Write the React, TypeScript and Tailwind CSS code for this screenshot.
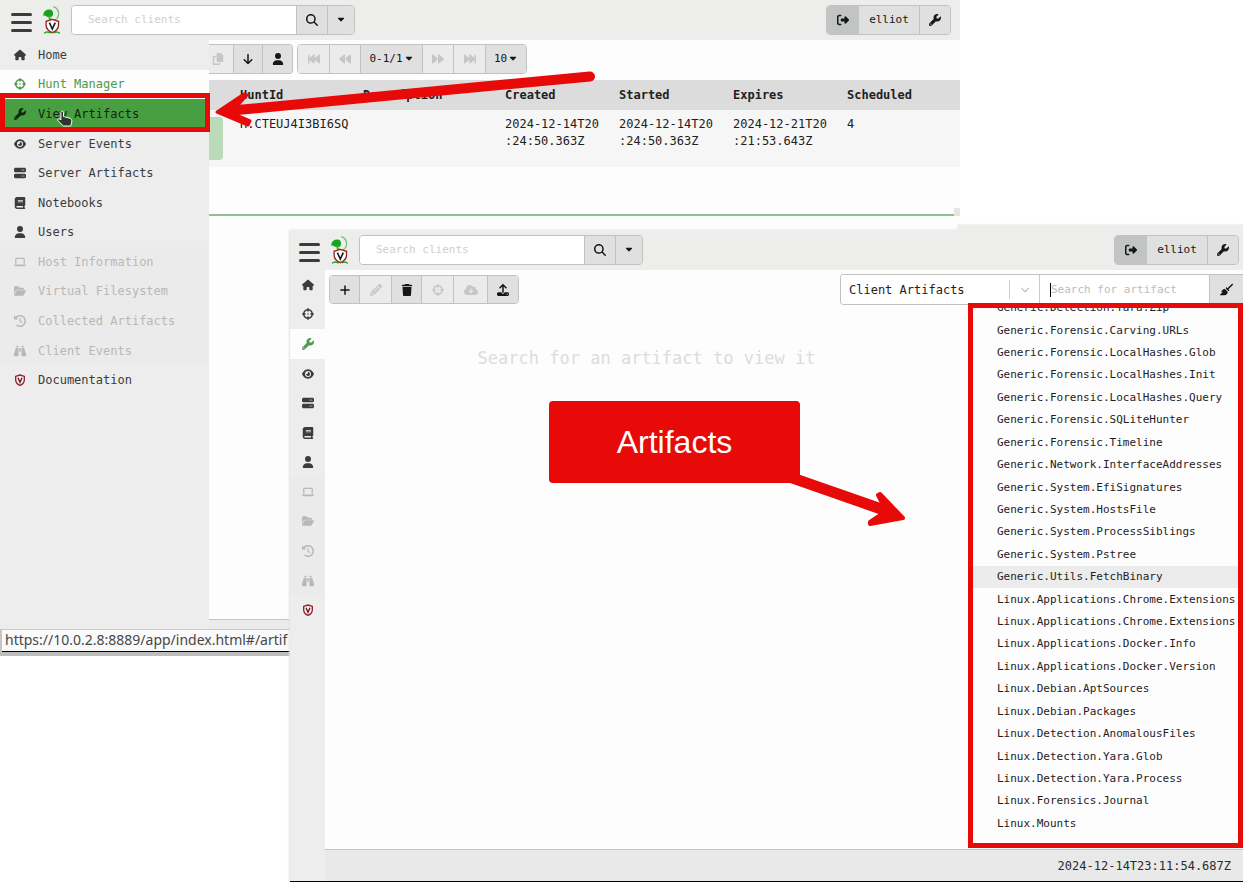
import type { ComponentType, ReactNode } from "react";
import {
  FaArrowDown,
  FaBackward,
  FaBackwardFast,
  FaBinoculars,
  FaBook,
  FaBroom,
  FaCaretDown,
  FaClockRotateLeft,
  FaCloudArrowDown,
  FaCopy,
  FaCrosshairs,
  FaEye,
  FaFolderOpen,
  FaForward,
  FaForwardFast,
  FaHouse,
  FaLaptop,
  FaMagnifyingGlass,
  FaPencil,
  FaPlus,
  FaRightFromBracket,
  FaServer,
  FaTrash,
  FaUpload,
  FaUser,
  FaWrench,
} from "react-icons/fa6";
import { FiChevronDown } from "react-icons/fi";

type IconType = ComponentType<{ className?: string }>;

function ShieldIcon({ className }: { className?: string }) {
  return (
    <svg viewBox="0 0 32 36" className={className} fill="none" aria-hidden="true">
      <path
        d="M16 3 L29 7 V17 C29 25 23 31 16 34 C9 31 3 25 3 17 V7 Z"
        fill="#f7efef"
        stroke="#9c1f2b"
        strokeWidth="4"
        strokeLinejoin="round"
      />
      <path d="M10 11 L16 25 L22 11" stroke="#5a2028" strokeWidth="4" />
    </svg>
  );
}

function Logo() {
  return (
    <svg viewBox="126 14 57 92" className="h-[30px] w-[19px]" fill="none" role="img" aria-label="Velociraptor">
      <path d="M160 19 C172 22 178 34 176 46 C175 52 171 57 165 60" stroke="#6cbd78" strokeWidth="4" />
      <path d="M130 40 C132 31 142 25 154 29 C161 33 161 45 155 50 C147 52 139 50 135 46 L129 47 Z" fill="#17a31c" />
      <path d="M150 46 C146 52 148 57 155 60" stroke="#3fae45" strokeWidth="6" />
      <path d="M132 101 C138 94 146 97 152 100 M162 100 C168 95 175 97 180 101" stroke="#22a52a" strokeWidth="4" />
      <path
        d="M157 58 L176 64 V76 C176 87 168 94 157 99 C146 94 138 87 138 76 V64 Z"
        fill="#fff"
        stroke="#8d2420"
        strokeWidth="4"
      />
      <path d="M148 68 L157 88 L166 68" stroke="#1c1c1c" strokeWidth="5" />
    </svg>
  );
}

const navItems: { label: string; icon: IconType; disabled?: boolean }[] = [
  { label: "Home", icon: FaHouse },
  { label: "Hunt Manager", icon: FaCrosshairs },
  { label: "View Artifacts", icon: FaWrench },
  { label: "Server Events", icon: FaEye },
  { label: "Server Artifacts", icon: FaServer },
  { label: "Notebooks", icon: FaBook },
  { label: "Users", icon: FaUser },
  { label: "Host Information", icon: FaLaptop, disabled: true },
  { label: "Virtual Filesystem", icon: FaFolderOpen, disabled: true },
  { label: "Collected Artifacts", icon: FaClockRotateLeft, disabled: true },
  { label: "Client Events", icon: FaBinoculars, disabled: true },
  { label: "Documentation", icon: ShieldIcon },
];

function navTone(label: string, active: string, hovered: string | undefined, disabled?: boolean) {
  if (label === hovered) return "bg-[#489f41] text-[#12240f]";
  if (label === active) return "bg-[#fdfdfd] text-[#4c9a4c]";
  if (disabled) return "bg-[#ebebeb] text-[#b8b8b8]";
  return "text-[#3a3d3d]";
}

function Nav({ active, hovered, expanded }: { active: string; hovered?: string; expanded?: boolean }) {
  return (
    <nav aria-label={expanded ? "Main menu" : "Compact menu"} className="bg-[#ededed]">
      <ul className="grid h-[355px] grid-rows-12">
        {navItems.map(({ label, icon: Icon, disabled }) => (
          <li key={label} className="grid">
            <a
              href={"#" + label.toLowerCase().replace(" ", "-")}
              aria-label={label}
              aria-disabled={disabled}
              className={
                "flex items-center text-[12px] leading-4 " +
                (expanded ? "pl-[14px] " : "pl-[12px] ") +
                navTone(label, active, hovered, disabled)
              }
            >
              <Icon className="h-3 w-3 shrink-0" />
              {expanded && <span className="pl-3">{label}</span>}
            </a>
          </li>
        ))}
      </ul>
    </nav>
  );
}

function ToolButton({
  label,
  width,
  disabled,
  tone = "bg-[#dfe0df]",
  children,
}: {
  label: string;
  width: string;
  disabled?: boolean;
  tone?: string;
  children: ReactNode;
}) {
  return (
    <button
      type="button"
      aria-label={label}
      disabled={disabled}
      className={
        "flex h-full items-center justify-center gap-px border-l border-[#c0c4c1] text-[11px] first:border-l-0 " +
        width +
        " " +
        (disabled ? "bg-[#ebebeb] text-[#c6c6c6]" : tone + " text-[#161616]")
      }
    >
      {children}
    </button>
  );
}

function Caret() {
  return <FaCaretDown className="mb-[2px] size-[10px]" />;
}

function Group({ children, height = "h-[30px]" }: { children: ReactNode; height?: string }) {
  return (
    <div className={"flex shrink-0 overflow-hidden rounded border border-[#c0c4c1] " + height}>{children}</div>
  );
}

function TopBar({ padding }: { padding: string }) {
  return (
    <header className={"flex h-10 items-center bg-[#ededec] " + padding}>
      <button type="button" aria-label="Toggle menu" className="mt-[5px] flex w-[21px] flex-col gap-[5px]">
        <span className="h-[3px] rounded bg-[#3b3d3d]" />
        <span className="h-[3px] rounded bg-[#3b3d3d]" />
        <span className="h-[3px] rounded bg-[#3b3d3d]" />
      </button>
      <a href="#welcome" className="ml-[10px]">
        <Logo />
      </a>
      <form className="ml-[10px] flex h-[30px] w-[284px] overflow-hidden rounded border border-[#bfc3c0]">
        <input
          aria-label="Search clients"
          placeholder="Search clients"
          className="min-w-0 flex-1 bg-white pt-px pl-4 text-[11px] placeholder:text-[#cfcfcf]"
        />
        <ToolButton label="Search" width="w-[31px] first-of-type:border-l">
          <FaMagnifyingGlass className="size-3" />
        </ToolButton>
        <ToolButton label="Search options" width="w-[27px]">
          <Caret />
        </ToolButton>
      </form>
      <div className="ml-auto">
        <Group>
          <ToolButton label="Log out" width="w-[31px]" tone="bg-[#c2c4c3]">
            <FaRightFromBracket className="size-3" />
          </ToolButton>
          <ToolButton label="User elliot" width="w-[61px]">
            elliot
          </ToolButton>
          <ToolButton label="Settings" width="w-[31px]">
            <FaWrench className="size-3" />
          </ToolButton>
        </Group>
      </div>
    </header>
  );
}

const huntColumns = [
  { name: "HuntId", value: "H.CTEUJ4I3BI6SQ", width: "w-[123px]" },
  { name: "Description", value: "", width: "w-[142px]" },
  { name: "Created", value: "2024-12-14T20\n:24:50.363Z", width: "w-[114px]" },
  { name: "Started", value: "2024-12-14T20\n:24:50.363Z", width: "w-[114px]" },
  { name: "Expires", value: "2024-12-21T20\n:21:53.643Z", width: "w-[114px]" },
  { name: "Scheduled", value: "4", width: "" },
];

function HuntTable() {
  return (
    <table className="w-full table-fixed border-collapse text-left text-[12px] leading-[17px] text-[#1f2121]">
      <thead>
        <tr className="h-[30px] bg-[#dcdcdc]">
          <th className="w-[26px]" aria-label="State" />
          {huntColumns.map((c) => (
            <th key={c.name} className={"pl-[5px] font-bold " + c.width}>
              {c.name}
            </th>
          ))}
        </tr>
      </thead>
      <tbody>
        <tr className="h-[57px] bg-[#f6f6f6] align-top">
          <td className="pt-[7px]">
            <button
              type="button"
              aria-label="Hunt state"
              className="block h-[43px] w-[14px] rounded-r bg-[#bbdbb8]"
            />
          </td>
          {huntColumns.map((c) => (
            <td key={c.name} className="pt-[6px] pl-[5px] whitespace-pre">
              {c.value}
            </td>
          ))}
        </tr>
      </tbody>
    </table>
  );
}

function HandCursor() {
  return (
    <svg viewBox="168 331 50 52" className="absolute top-[110px] left-[56px] h-[17px] w-[17px]" aria-hidden="true">
      <path
        d="M182 338 C182 333 190 333 190 338 V351 L209 356 C215 358 216 362 215 368 L212 380 H190 L173 364 C170 359 175 356 179 359 L182 361 Z"
        fill="#2f3430"
        stroke="#fff"
        strokeWidth="3"
        strokeLinejoin="round"
      />
    </svg>
  );
}

function HuntManagerWindow() {
  return (
    <section
      aria-label="Hunt manager"
      className="relative col-start-1 row-start-1 mr-[283px] flex h-[656px] flex-col overflow-hidden bg-[#fdfdfd]"
    >
      <TopBar padding="pl-[11px] pr-[9px]" />
      <div className="flex min-h-0 flex-1">
        <div className="w-[209px] shrink-0 bg-[#ededed]">
          <Nav active="Hunt Manager" hovered="View Artifacts" expanded />
        </div>
        <main className="flex min-w-0 flex-1 flex-col">
          <div className="flex h-10 items-start gap-1 pt-1">
            <div className="flex h-[30px] overflow-hidden rounded-r border border-l-0 border-[#c0c4c1]">
              <ToolButton label="Copy hunt" width="w-6 pr-[6px]" disabled>
                <FaCopy className="size-3" />
              </ToolButton>
              <ToolButton label="Download results" width="w-[29px]">
                <FaArrowDown className="size-3" />
              </ToolButton>
              <ToolButton label="Show my hunts" width="w-[30px]">
                <FaUser className="size-3" />
              </ToolButton>
            </div>
            <Group>
              <ToolButton label="First page" width="w-[31px]" disabled>
                <FaBackwardFast className="size-3" />
              </ToolButton>
              <ToolButton label="Previous page" width="w-[31px]" disabled>
                <FaBackward className="size-3" />
              </ToolButton>
              <ToolButton label="Rows 0-1/1" width="w-[62px]">
                0-1/1
                <Caret />
              </ToolButton>
              <ToolButton label="Next page" width="w-[31px]" disabled>
                <FaForward className="size-3" />
              </ToolButton>
              <ToolButton label="Last page" width="w-8" disabled>
                <FaForwardFast className="size-3" />
              </ToolButton>
              <ToolButton label="Page size 10" width="w-[41px]">
                10
                <Caret />
              </ToolButton>
            </Group>
          </div>
          <HuntTable />
          <div className="mt-[41px] flex items-end">
            <div className="h-[2px] flex-1 bg-[#8fc193]" />
            <div className="h-2 w-[6px] bg-[#e4e5e5]" />
          </div>
          <div className="flex-1" />
          <div className="h-[37px] border-t border-[#c3c5c4] bg-[#ebebeb]" />
        </main>
      </div>
      <p className="absolute bottom-0 left-0 w-full border-b-4 border-[#bdbdbd] bg-[#c5c5c5] pl-[2px]">
        <span className="block h-[23px] overflow-hidden border-t border-b border-t-[#c9c9c9] border-b-black bg-[#fafafa] pl-[3px] font-['Noto_Sans',sans-serif] text-[14px] leading-5 text-[#474747]">
          https://10.0.2.8:8889/app/index.html#/artif
        </span>
      </p>
      <div className="pointer-events-none absolute top-[93px] left-0 h-[39px] w-[210px] border-[5px] border-[#e80909]" />
      <HandCursor />
      <svg viewBox="0 0 390 64" className="absolute top-[68px] left-[210px] h-16 w-[390px]" aria-hidden="true">
        <path d="M380 8.500 L22 42.500" stroke="#e80909" strokeWidth="10" strokeLinecap="round" />
        <path
          d="M7 44 L34 26 L37 27 L28 37 L26 47 L40 53 L38 57 Z"
          fill="#e80909"
          stroke="#e80909"
          strokeWidth="3"
          strokeLinejoin="round"
        />
      </svg>
    </section>
  );
}

const artifacts = [
  "Generic.Detection.Yara.Zip",
  "Generic.Forensic.Carving.URLs",
  "Generic.Forensic.LocalHashes.Glob",
  "Generic.Forensic.LocalHashes.Init",
  "Generic.Forensic.LocalHashes.Query",
  "Generic.Forensic.SQLiteHunter",
  "Generic.Forensic.Timeline",
  "Generic.Network.InterfaceAddresses",
  "Generic.System.EfiSignatures",
  "Generic.System.HostsFile",
  "Generic.System.ProcessSiblings",
  "Generic.System.Pstree",
  "Generic.Utils.FetchBinary",
  "Linux.Applications.Chrome.Extensions",
  "Linux.Applications.Chrome.Extensions",
  "Linux.Applications.Docker.Info",
  "Linux.Applications.Docker.Version",
  "Linux.Debian.AptSources",
  "Linux.Debian.Packages",
  "Linux.Detection.AnomalousFiles",
  "Linux.Detection.Yara.Glob",
  "Linux.Detection.Yara.Process",
  "Linux.Forensics.Journal",
  "Linux.Mounts",
];

function ArtifactToolbar() {
  return (
    <div className="flex h-[35px] items-start justify-between pt-1 pl-1">
      <div className="pt-px">
        <Group height="h-[29px]">
          <ToolButton label="Add artifact" width="w-[29px]">
            <FaPlus className="size-3" />
          </ToolButton>
          <ToolButton label="Edit artifact" width="w-8" disabled>
            <FaPencil className="size-3" />
          </ToolButton>
          <ToolButton label="Delete artifact" width="w-[30px]">
            <FaTrash className="size-3" />
          </ToolButton>
          <ToolButton label="Hunt artifact" width="w-8" disabled>
            <FaCrosshairs className="size-3" />
          </ToolButton>
          <ToolButton label="Collect artifact" width="w-[34px]" disabled>
            <FaCloudArrowDown className="size-[14px]" />
          </ToolButton>
          <ToolButton label="Upload artifacts" width="w-[31px]">
            <FaUpload className="size-3" />
          </ToolButton>
        </Group>
      </div>
      <form className="flex h-[31px] overflow-hidden rounded-l border border-r-0 border-[#bfc3c0] bg-white">
        <div className="relative w-[198px]">
          <select
            aria-label="Artifact type"
            className="size-full appearance-none bg-white pl-2 text-[12px] text-[#1f2121]"
          >
            <option>Client Artifacts</option>
          </select>
          <span className="pointer-events-none absolute inset-y-[5px] right-0 flex w-[30px] items-center justify-center border-l border-[#cfcfcf] text-[#c4c4c4]">
            <FiChevronDown className="size-[14px]" />
          </span>
        </div>
        <div className="flex w-[170px] items-center border-l border-[#c7cac8] pl-[10px]">
          <span className="h-[14px] w-px shrink-0 bg-black" />
          <input
            aria-label="Search for artifact"
            placeholder="Search for artifact"
            className="min-w-0 flex-1 bg-transparent pt-px text-[11px] placeholder:text-[#bcbcbc]"
          />
        </div>
        <ToolButton label="Clear search" width="w-[34px]">
          <FaBroom className="size-[13px]" />
        </ToolButton>
      </form>
    </div>
  );
}

function ArtifactWindow() {
  return (
    <section
      aria-label="Artifact viewer"
      className="relative col-start-1 row-start-1 mt-[230px] ml-[290px] flex flex-col border-b border-black bg-[#fdfdfd] shadow-[-1px_0_2px_#e2e2e2]"
    >
      <div className="absolute -top-[5px] right-0 left-[667px] h-[6px] bg-[#ededec] shadow-[0_-1px_1px_#f3f3f3]" />
      <TopBar padding="pl-[9px] pr-1" />
      <div className="flex flex-1">
        <div className="w-[35px] shrink-0 bg-[#ededed]">
          <Nav active="View Artifacts" />
        </div>
        <main className="flex min-w-0 flex-1 flex-col">
          <ArtifactToolbar />
          <div className="flex min-h-0 flex-1">
            <div className="flex min-w-0 flex-1 flex-col items-center pt-[41px]">
              <p className="text-[17px] leading-6 text-[#dcdcdc]">Search for an artifact to view it</p>
              <div className="relative mt-[31px] mr-[-56px]">
                <p className="relative z-10 flex h-[82px] w-[251px] items-center justify-center rounded bg-[#e80909] font-['Liberation_Sans',Arial,sans-serif] text-[32px] text-white">
                  Artifacts
                </p>
                <svg
                  viewBox="0 0 130 56"
                  className="absolute top-[72px] left-[229px] h-14 w-[130px]"
                  fill="#e80909"
                  stroke="#e80909"
                  strokeLinejoin="round"
                  aria-hidden="true"
                >
                  <path d="M0 0 L106 37" strokeWidth="11" fill="none" />
                  <path d="M125 45 L102 21 L100 22 L106 34 L104 41 L92 49 L92 51 Z" strokeWidth="4" />
                </svg>
              </div>
            </div>
            <div className="relative z-10 -mt-[2px] mb-px w-[275px] border-[5px] border-[#e80909] bg-[#fdfdfd] pb-2">
              <div className="flex h-[527px] flex-col justify-end overflow-hidden">
                <ul className="grid h-[538px] shrink-0 auto-rows-fr">
                  {artifacts.map((name, i) => (
                    <li key={i} className="grid">
                      <a
                        href={"#" + name}
                        className={
                          "flex items-center overflow-hidden pl-6 text-[11px] leading-4 whitespace-nowrap text-[#1f2121] " +
                          (name === "Generic.Utils.FetchBinary" ? "bg-[#ececec]" : "")
                        }
                      >
                        {name}
                      </a>
                    </li>
                  ))}
                </ul>
              </div>
            </div>
          </div>
          <footer className="flex h-8 items-center justify-end border-t border-[#c3c5c4] bg-[#e9e9e9] pr-3 text-[12px] text-[#2a2c2c]">
            2024-12-14T23:11:54.687Z
          </footer>
        </main>
      </div>
    </section>
  );
}

export default function App() {
  return (
    <div className="grid min-h-screen grid-cols-1 overflow-hidden bg-white font-['DejaVu_Sans_Mono',monospace]">
      <HuntManagerWindow />
      <ArtifactWindow />
    </div>
  );
}
